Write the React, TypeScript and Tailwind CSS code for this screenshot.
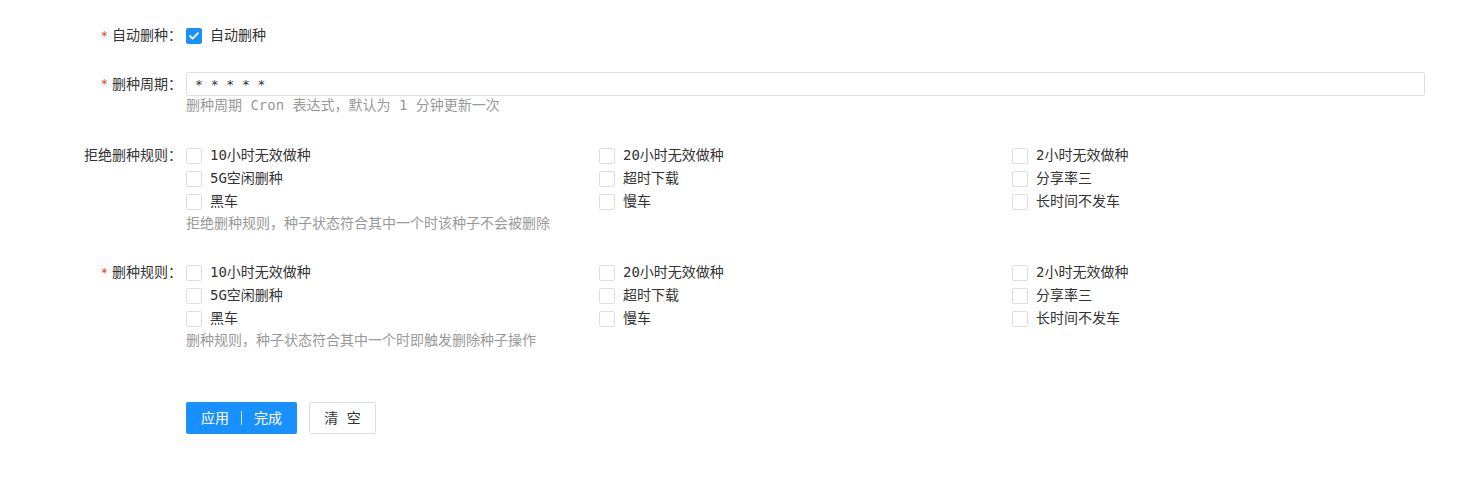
import type { ReactNode } from "react";

const ruleOptions = [
  "10小时无效做种",
  "20小时无效做种",
  "2小时无效做种",
  "5G空闲删种",
  "超时下载",
  "分享率三",
  "黑车",
  "慢车",
  "长时间不发车",
];

function FormLabel({ required, children }: { required?: boolean; children: ReactNode }) {
  return (
    <div className="flex h-[23px] w-[186px] shrink-0 items-center justify-end pr-[4px] text-[#333]">
      {required ? <span className="mr-[4px] text-[12px] text-[#ed4014]">*</span> : null}
      <span>{children}：</span>
    </div>
  );
}

function Checkbox({ checked, label }: { checked?: boolean; label: string }) {
  return (
    <label className="flex h-[23px] items-center">
      {checked ? (
        <span className="flex h-[16px] w-[16px] items-center justify-center rounded-[2px] bg-[#1890ff]">
          <svg width="10" height="8" viewBox="0 0 10 8" fill="none">
            <path d="M1 4l2.6 2.6L9 1.2" stroke="white" strokeWidth="1.8" strokeLinecap="round" strokeLinejoin="round" />
          </svg>
        </span>
      ) : (
        <span className="h-[16px] w-[16px] rounded-[2px] border border-[#dcdee2] bg-white" />
      )}
      <span className="ml-[8px] text-[#333]">{label}</span>
    </label>
  );
}

function RuleGroup() {
  return (
    <div className="grid grid-cols-3">
      {ruleOptions.map((option) => (
        <Checkbox key={option} label={option} />
      ))}
    </div>
  );
}

export default function App() {
  return (
    <div
      className="min-h-[487px] bg-white pr-[35px] pt-[24px] text-[14px]"
      style={{ fontFamily: '"DejaVu Sans Mono", "Noto Sans CJK SC", monospace' }}
    >
      <div className="mb-[25px] flex">
        <FormLabel required>自动删种</FormLabel>
        <div className="flex-1">
          <Checkbox checked label="自动删种" />
        </div>
      </div>

      <div className="mb-[30px] flex">
        <div className="flex h-[24px] items-center">
          <FormLabel required>删种周期</FormLabel>
        </div>
        <div className="flex-1">
          <input
            readOnly
            value="* * * * *"
            className="h-[24px] w-full rounded-[2px] border border-[#dcdee2] px-[8px] text-[13px] text-[#333] outline-none"
          />
          <p className="h-[18px] leading-[18px] text-[#999]">删种周期 Cron 表达式，默认为 1 分钟更新一次</p>
        </div>
      </div>

      <div className="mb-[28px] flex">
        <FormLabel>拒绝删种规则</FormLabel>
        <div className="flex-1">
          <RuleGroup />
          <p className="h-[20px] leading-[20px] text-[#999]">拒绝删种规则，种子状态符合其中一个时该种子不会被删除</p>
        </div>
      </div>

      <div className="mb-[52px] flex">
        <FormLabel required>删种规则</FormLabel>
        <div className="flex-1">
          <RuleGroup />
          <p className="h-[20px] leading-[20px] text-[#999]">删种规则，种子状态符合其中一个时即触发删除种子操作</p>
        </div>
      </div>

      <div className="flex pl-[186px]">
        <button
          type="button"
          className="flex h-[32px] w-[111px] items-center justify-center rounded-[2px] bg-[#1890ff] text-white"
        >
          应用
          <span className="mx-[12px] h-[14px] w-px bg-white/80" />
          完成
        </button>
        <button
          type="button"
          className="ml-[12px] h-[32px] w-[67px] rounded-[2px] border border-[#dcdee2] bg-white text-[#333]"
        >
          清 空
        </button>
      </div>
    </div>
  );
}
